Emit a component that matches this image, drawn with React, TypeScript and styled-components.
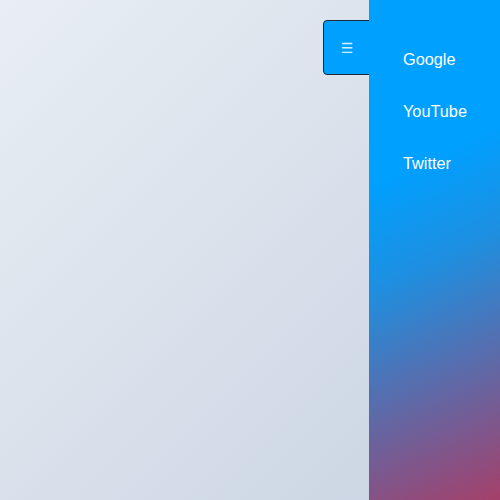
import React from "react";
import styled, { createGlobalStyle } from "styled-components";

const Global = createGlobalStyle`
  html, body { margin: 0; padding: 0; height: 100%; }
  body { font-family: "Liberation Sans", Arial, sans-serif; }
  #root { height: 100%; }
`;

const Page = styled.div`
  position: relative;
  width: 500px;
  height: 500px;
  overflow: hidden;
  background: linear-gradient(135deg, #e9eef4 0%, #c8d3e2 100%);
  display: flex;
  justify-content: flex-end;
`;

const Drawer = styled.aside`
  position: relative;
  width: 131px;
  height: 100%;
`;

const Panel = styled.nav`
  position: relative;
  z-index: 1;
  height: 100%;
  background: linear-gradient(155deg, #00a0ff 0%, #00a0ff 33%, #1e8fe0 52%, #a5406a 100%);
  display: flex;
  flex-direction: column;
  padding: 40px 0 0 34px;
  box-sizing: border-box;
`;

const Toggle = styled.button`
  position: absolute;
  z-index: 0;
  top: 20px;
  left: -46px;
  width: 60px;
  height: 55px;
  box-sizing: border-box;
  background: #00a0ff;
  border: 1px solid #1a2a40;
  border-radius: 4px;
  color: #d6eeff;
  font-size: 14px;
  font-family: "DejaVu Sans", sans-serif;
  padding: 0 12px 0 0;
  display: flex;
  align-items: center;
  justify-content: center;
  cursor: pointer;
`;

const NavLink = styled.a`
  display: block;
  height: 52px;
  line-height: 38px;
  color: #ffffff;
  font-size: 16.3px;
  text-decoration: none;
`;

export default function App() {
  return (
    <>
      <Global />
      <Page>
        <Drawer>
          <Toggle aria-label="menu">☰</Toggle>
          <Panel>
            <NavLink href="#">Google</NavLink>
            <NavLink href="#">YouTube</NavLink>
            <NavLink href="#">Twitter</NavLink>
          </Panel>
        </Drawer>
      </Page>
    </>
  );
}
